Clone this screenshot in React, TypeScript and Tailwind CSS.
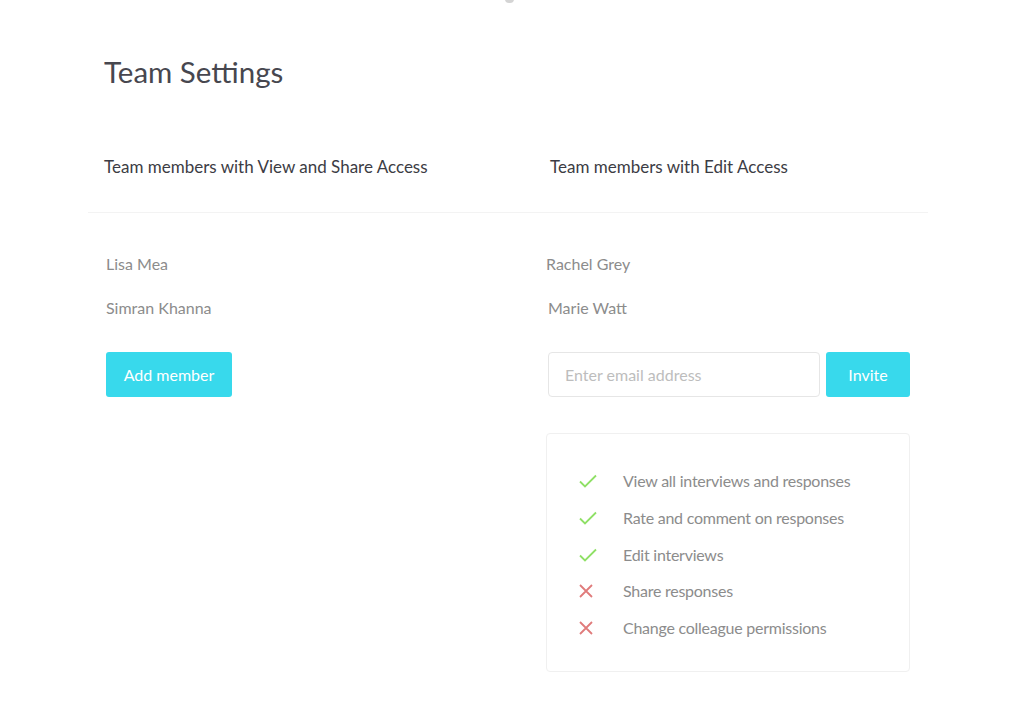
import React from "react"

const font = { fontFamily: "Lato, 'Open Sans', sans-serif" }

const permissions = [
  { label: "View all interviews and responses", allowed: true },
  { label: "Rate and comment on responses", allowed: true },
  { label: "Edit interviews", allowed: true },
  { label: "Share responses", allowed: false },
  { label: "Change colleague permissions", allowed: false },
]

function Check() {
  return (
    <svg width="18" height="14" viewBox="0 0 18 14" fill="none">
      <path d="M1 7.5 L6 12.5 L17 1.5" stroke="#8fe066" strokeWidth="1.8" />
    </svg>
  )
}

function Cross() {
  return (
    <svg width="14" height="14" viewBox="0 0 14 14" fill="none">
      <path d="M1 1 L13 13 M13 1 L1 13" stroke="#e07b7b" strokeWidth="1.8" />
    </svg>
  )
}

export default function App() {
  return (
    <div className="relative min-h-screen bg-white" style={font}>
      <div className="absolute left-[505px] top-[-5px] h-[8px] w-[9px] rounded-full bg-[#d4d4d4]" />
      <div className="ml-[88px] w-[840px] pt-[55px]">
        <h1 className="pl-[16px] text-[29.5px] leading-[34px] text-[#47474f]">Team Settings</h1>

        <div className="mt-[66px] flex">
          <div className="w-[458px] pl-[16px] text-[17px] leading-[24px] text-[#3c3c44]">
            Team members with View and Share Access
          </div>
          <div className="pl-[4px] text-[17px] leading-[24px] text-[#3c3c44]">
            Team members with Edit Access
          </div>
        </div>

        <div className="mt-[33px] border-t border-[#f3f3f3]" />

        <div className="flex">
          <div className="w-[458px] pl-[18px]">
            <div className="mt-[39px] text-[16px] leading-[24px] text-[#8c8c8c]">Lisa Mea</div>
            <div className="mt-[20px] text-[16px] leading-[24px] text-[#8c8c8c]">Simran Khanna</div>
            <button className="mt-[32px] h-[45px] w-[126px] rounded-[3px] bg-[#38d9ec] text-[16px] text-white">
              Add member
            </button>
          </div>

          <div className="w-[364px]">
            <div className="mt-[39px] text-[16px] leading-[24px] text-[#8c8c8c]">Rachel Grey</div>
            <div className="mt-[20px] pl-[2px] text-[16px] leading-[24px] text-[#8c8c8c]">Marie Watt</div>
            <div className="mt-[32px] flex gap-[6px] pl-[2px]">
              <input
                placeholder="Enter email address"
                className="h-[45px] w-[272px] rounded-[4px] border border-[#e6e6e6] px-[16px] text-[16px] text-[#555] placeholder:text-[#bdbdbd] outline-none"
                style={font}
              />
              <button className="h-[45px] w-[84px] rounded-[3px] bg-[#38d9ec] text-[16px] text-white">
                Invite
              </button>
            </div>

            <div className="mt-[36px] flex h-[239px] flex-col gap-[12.75px] rounded-[4px] border border-[#f0f0f0] pl-[32px] pt-[35px]">
              {permissions.map((p) => (
                <div key={p.label} className="flex items-center">
                  <div className="flex w-[44px] items-center">{p.allowed ? <Check /> : <Cross />}</div>
                  <span className="text-[16px] leading-[24px] tracking-[-0.25px] text-[#8c8c8c]">{p.label}</span>
                </div>
              ))}
            </div>
          </div>
        </div>
      </div>
    </div>
  )
}
